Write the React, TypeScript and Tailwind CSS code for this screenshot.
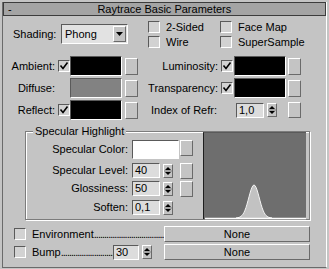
import React from "react";

const sunken =
  "border border-t-[#5a5a5a] border-l-[#5a5a5a] border-b-white border-r-white";
const raised =
  "border border-t-white border-l-white border-b-[#6a6a6a] border-r-[#6a6a6a]";

const Check = ({ checked = false }: { checked?: boolean }) => (
  <div className={`w-[12px] h-[12px] shrink-0 bg-[#d2d2d2] ${sunken}`}>
    {checked && (
      <svg width="10" height="10" viewBox="0 0 10 10">
        <path d="M1.5 4.5 L4 7.5 L8.5 1.5" stroke="#000" strokeWidth="1.6" fill="none" />
      </svg>
    )}
  </div>
);

const SmallButton = ({ h = "h-[17px]" }: { h?: string }) => (
  <div className={`w-[13px] ${h} shrink-0 bg-[#c4c4c4] ${raised}`} />
);

const Arrows = () => (
  <div className={`w-[10px] h-[14px] shrink-0 bg-[#c4c4c4] flex flex-col ${raised}`}>
    <svg width="8" height="12" viewBox="0 0 8 12">
      <path d="M1 5 L4 2 L7 5 Z" fill="#000" />
      <line x1="0" y1="6" x2="8" y2="6" stroke="#808080" />
      <path d="M1 7 L7 7 L4 10 Z" fill="#000" />
    </svg>
  </div>
);

const Spinner = ({ value, w = "w-[28px]" }: { value: string; w?: string }) => (
  <div className="flex items-center shrink-0">
    <div className={`${w} h-[15px] bg-[#dcdcdc] ${sunken} flex items-center pl-[2px] leading-none`}>
      {value}
    </div>
    <div className="ml-[3px]">
      <Arrows />
    </div>
  </div>
);

const Swatch = ({ color, w = "w-[52px]", h = "h-[20px]" }: { color: string; w?: string; h?: string }) => (
  <div className={`${w} ${h} shrink-0 ${color} ${sunken}`} />
);

const ColorRow = ({
  label,
  checked,
  hasCheck,
  color,
  right,
}: {
  label: string;
  checked?: boolean;
  hasCheck: boolean;
  color: string;
  right: React.ReactNode;
}) => (
  <div className="flex items-center h-[22px]">
    <div className="w-[53px] text-right pr-[1px] shrink-0">{label}</div>
    <div className="ml-[2px] w-[12px] shrink-0">{hasCheck && <Check checked={checked} />}</div>
    <div className="ml-[0px]">
      <Swatch color={color} />
    </div>
    <div className="ml-[3px]">
      <SmallButton />
    </div>
    {right}
  </div>
);

const RightColor = ({ label, color }: { label: string; color: string }) => (
  <>
    <div className="w-[81px] text-right pr-[1px] shrink-0">{label}</div>
    <div className="ml-[2px]">
      <Check checked />
    </div>
    <div className="ml-[1px]">
      <Swatch color={color} />
    </div>
    <div className="ml-[2px]">
      <SmallButton />
    </div>
  </>
);

const Curve = () => {
  const pts: string[] = [];
  for (let x = 32; x <= 68; x += 1) {
    const y = 85 - 33 * Math.exp(-Math.pow((x - 50) / 7.5, 2));
    pts.push(`${x},${y.toFixed(2)}`);
  }
  return (
    <svg width="103" height="87" viewBox="0 0 103 87">
      <polygon points={`32,85 ${pts.join(" ")} 68,85`} fill="#c2c2c2" />
      <polyline points={pts.join(" ")} stroke="#f4f4f4" strokeWidth="1" fill="none" />
      <line x1="1" y1="85.5" x2="102" y2="85.5" stroke="#ffffff" strokeWidth="1.5" />
    </svg>
  );
};

export default function App() {
  return (
    <div
      className="w-[329px] h-[269px] bg-[#c4c4c4] pt-[2px] pl-[2px] text-[11px] text-black overflow-hidden"
      style={{ fontFamily: '"Liberation Sans", Arial, sans-serif' }}
    >
      <div className="w-[325px] h-[266px] border-l border-r border-b border-l-[#6a6a6a] border-r-white border-b-[#6a6a6a] flex flex-col">
        {/* header */}
        <div className="h-[14px] bg-[#a4a4a4] border border-[#3c3c3c] flex items-center relative leading-none">
          <span className="pl-[4px]">-</span>
          <span className="flex-1 text-center -ml-[8px]">Raytrace Basic Parameters</span>
        </div>

        {/* shading + flags */}
        <div className="flex pl-[10px] mt-[5px] h-[29px]">
          <div className="w-[48px] h-[20px] mt-[3px] flex items-center shrink-0">Shading:</div>
          <div className={`w-[67px] h-[20px] mt-[3px] bg-[#e2e2e2] ${sunken} flex items-center justify-between shrink-0`}>
            <span className="pl-[3px]">Phong</span>
            <div className={`w-[13px] h-[16px] mr-[1px] bg-[#c4c4c4] ${raised} flex items-center justify-center`}>
              <svg width="7" height="4" viewBox="0 0 7 4">
                <path d="M0 0 L7 0 L3.5 4 Z" fill="#000" />
              </svg>
            </div>
          </div>
          <div className="ml-[20px] w-[72px] flex flex-col gap-[3px] shrink-0">
            <div className="flex items-center h-[12px]">
              <Check />
              <span className="ml-[6px]">2-Sided</span>
            </div>
            <div className="flex items-center h-[12px]">
              <Check />
              <span className="ml-[6px]">Wire</span>
            </div>
          </div>
          <div className="flex flex-col gap-[3px]">
            <div className="flex items-center h-[12px]">
              <Check />
              <span className="ml-[6px]">Face Map</span>
            </div>
            <div className="flex items-center h-[12px]">
              <Check />
              <span className="ml-[6px]">SuperSample</span>
            </div>
          </div>
        </div>

        {/* colour rows */}
        <div className="flex flex-col mt-[5px]">
          <ColorRow
            label="Ambient:"
            hasCheck
            checked
            color="bg-black"
            right={<RightColor label="Luminosity:" color="bg-black" />}
          />
          <ColorRow
            label="Diffuse:"
            hasCheck={false}
            color="bg-[#828282]"
            right={<RightColor label="Transparency:" color="bg-black" />}
          />
          <ColorRow
            label="Reflect:"
            hasCheck
            checked
            color="bg-black"
            right={
              <>
                <div className="w-[81px] text-right pr-[2px] shrink-0">Index of Refr:</div>
                <div className="ml-[17px]">
                  <Spinner value="1,0" w="w-[28px]" />
                </div>
                <div className="ml-[11px]">
                  <SmallButton h="h-[16px]" />
                </div>
              </>
            }
          />
        </div>

        {/* specular highlight group */}
        <div className="ml-[22px] mt-[10px] w-[285px] h-[89px] border border-[#7c7c7c] shadow-[inset_1px_1px_0_#ffffff,1px_1px_0_#ffffff] relative flex">
          <div className="absolute -top-[7px] left-[7px] px-[2px] bg-[#c4c4c4] leading-[13px]">
            Specular Highlight
          </div>
          <div className="w-[177px] flex flex-col pt-[8px] shrink-0">
            <div className="flex items-center h-[19px]">
              <div className="w-[102px] text-right shrink-0">Specular Color:</div>
              <div className="ml-[4px]">
                <Swatch color="bg-white" w="w-[47px]" h="h-[19px]" />
              </div>
              <div className="ml-[1px] self-start">
                <SmallButton h="h-[16px]" />
              </div>
            </div>
            <div className="flex items-center h-[15px] mt-[4px]">
              <div className="w-[102px] text-right shrink-0">Specular Level:</div>
              <div className="ml-[4px]">
                <Spinner value="40" />
              </div>
              <div className="ml-[7px]">
                <SmallButton h="h-[16px]" />
              </div>
            </div>
            <div className="flex items-center h-[15px] mt-[3px]">
              <div className="w-[102px] text-right shrink-0">Glossiness:</div>
              <div className="ml-[4px]">
                <Spinner value="50" />
              </div>
              <div className="ml-[7px]">
                <SmallButton h="h-[16px]" />
              </div>
            </div>
            <div className="flex items-center h-[15px] mt-[4px]">
              <div className="w-[102px] text-right shrink-0">Soften:</div>
              <div className="ml-[4px]">
                <Spinner value="0,1" />
              </div>
            </div>
          </div>
          <div className="w-[103px] h-[87px] bg-[#6e6e6e] border-l border-t border-l-[#1e1e1e] border-t-[#5a5a5a] shrink-0">
            <Curve />
          </div>
        </div>

        {/* maps */}
        <div className="flex items-center h-[16px] mt-[6px]">
          <div className="ml-[11px]">
            <Check />
          </div>
          <div className="ml-[6px] w-[132px] whitespace-nowrap shrink-0">
            Environment<span className="tracking-[-1px]">..................................</span>
          </div>
          <div className={`w-[146px] h-[16px] bg-[#c4c4c4] ${raised} flex items-center justify-center`}>
            None
          </div>
        </div>
        <div className="flex items-center h-[16px] mt-[2px]">
          <div className="ml-[11px]">
            <Check />
          </div>
          <div className="ml-[6px] w-[80px] whitespace-nowrap shrink-0">
            Bump<span className="tracking-[-1px]">...........................</span>
          </div>
          <div className="ml-[1px]">
            <Spinner value="30" w="w-[26px]" />
          </div>
          <div className={`ml-[12px] w-[146px] h-[16px] bg-[#c4c4c4] ${raised} flex items-center justify-center`}>
            None
          </div>
        </div>
      </div>
    </div>
  );
}
